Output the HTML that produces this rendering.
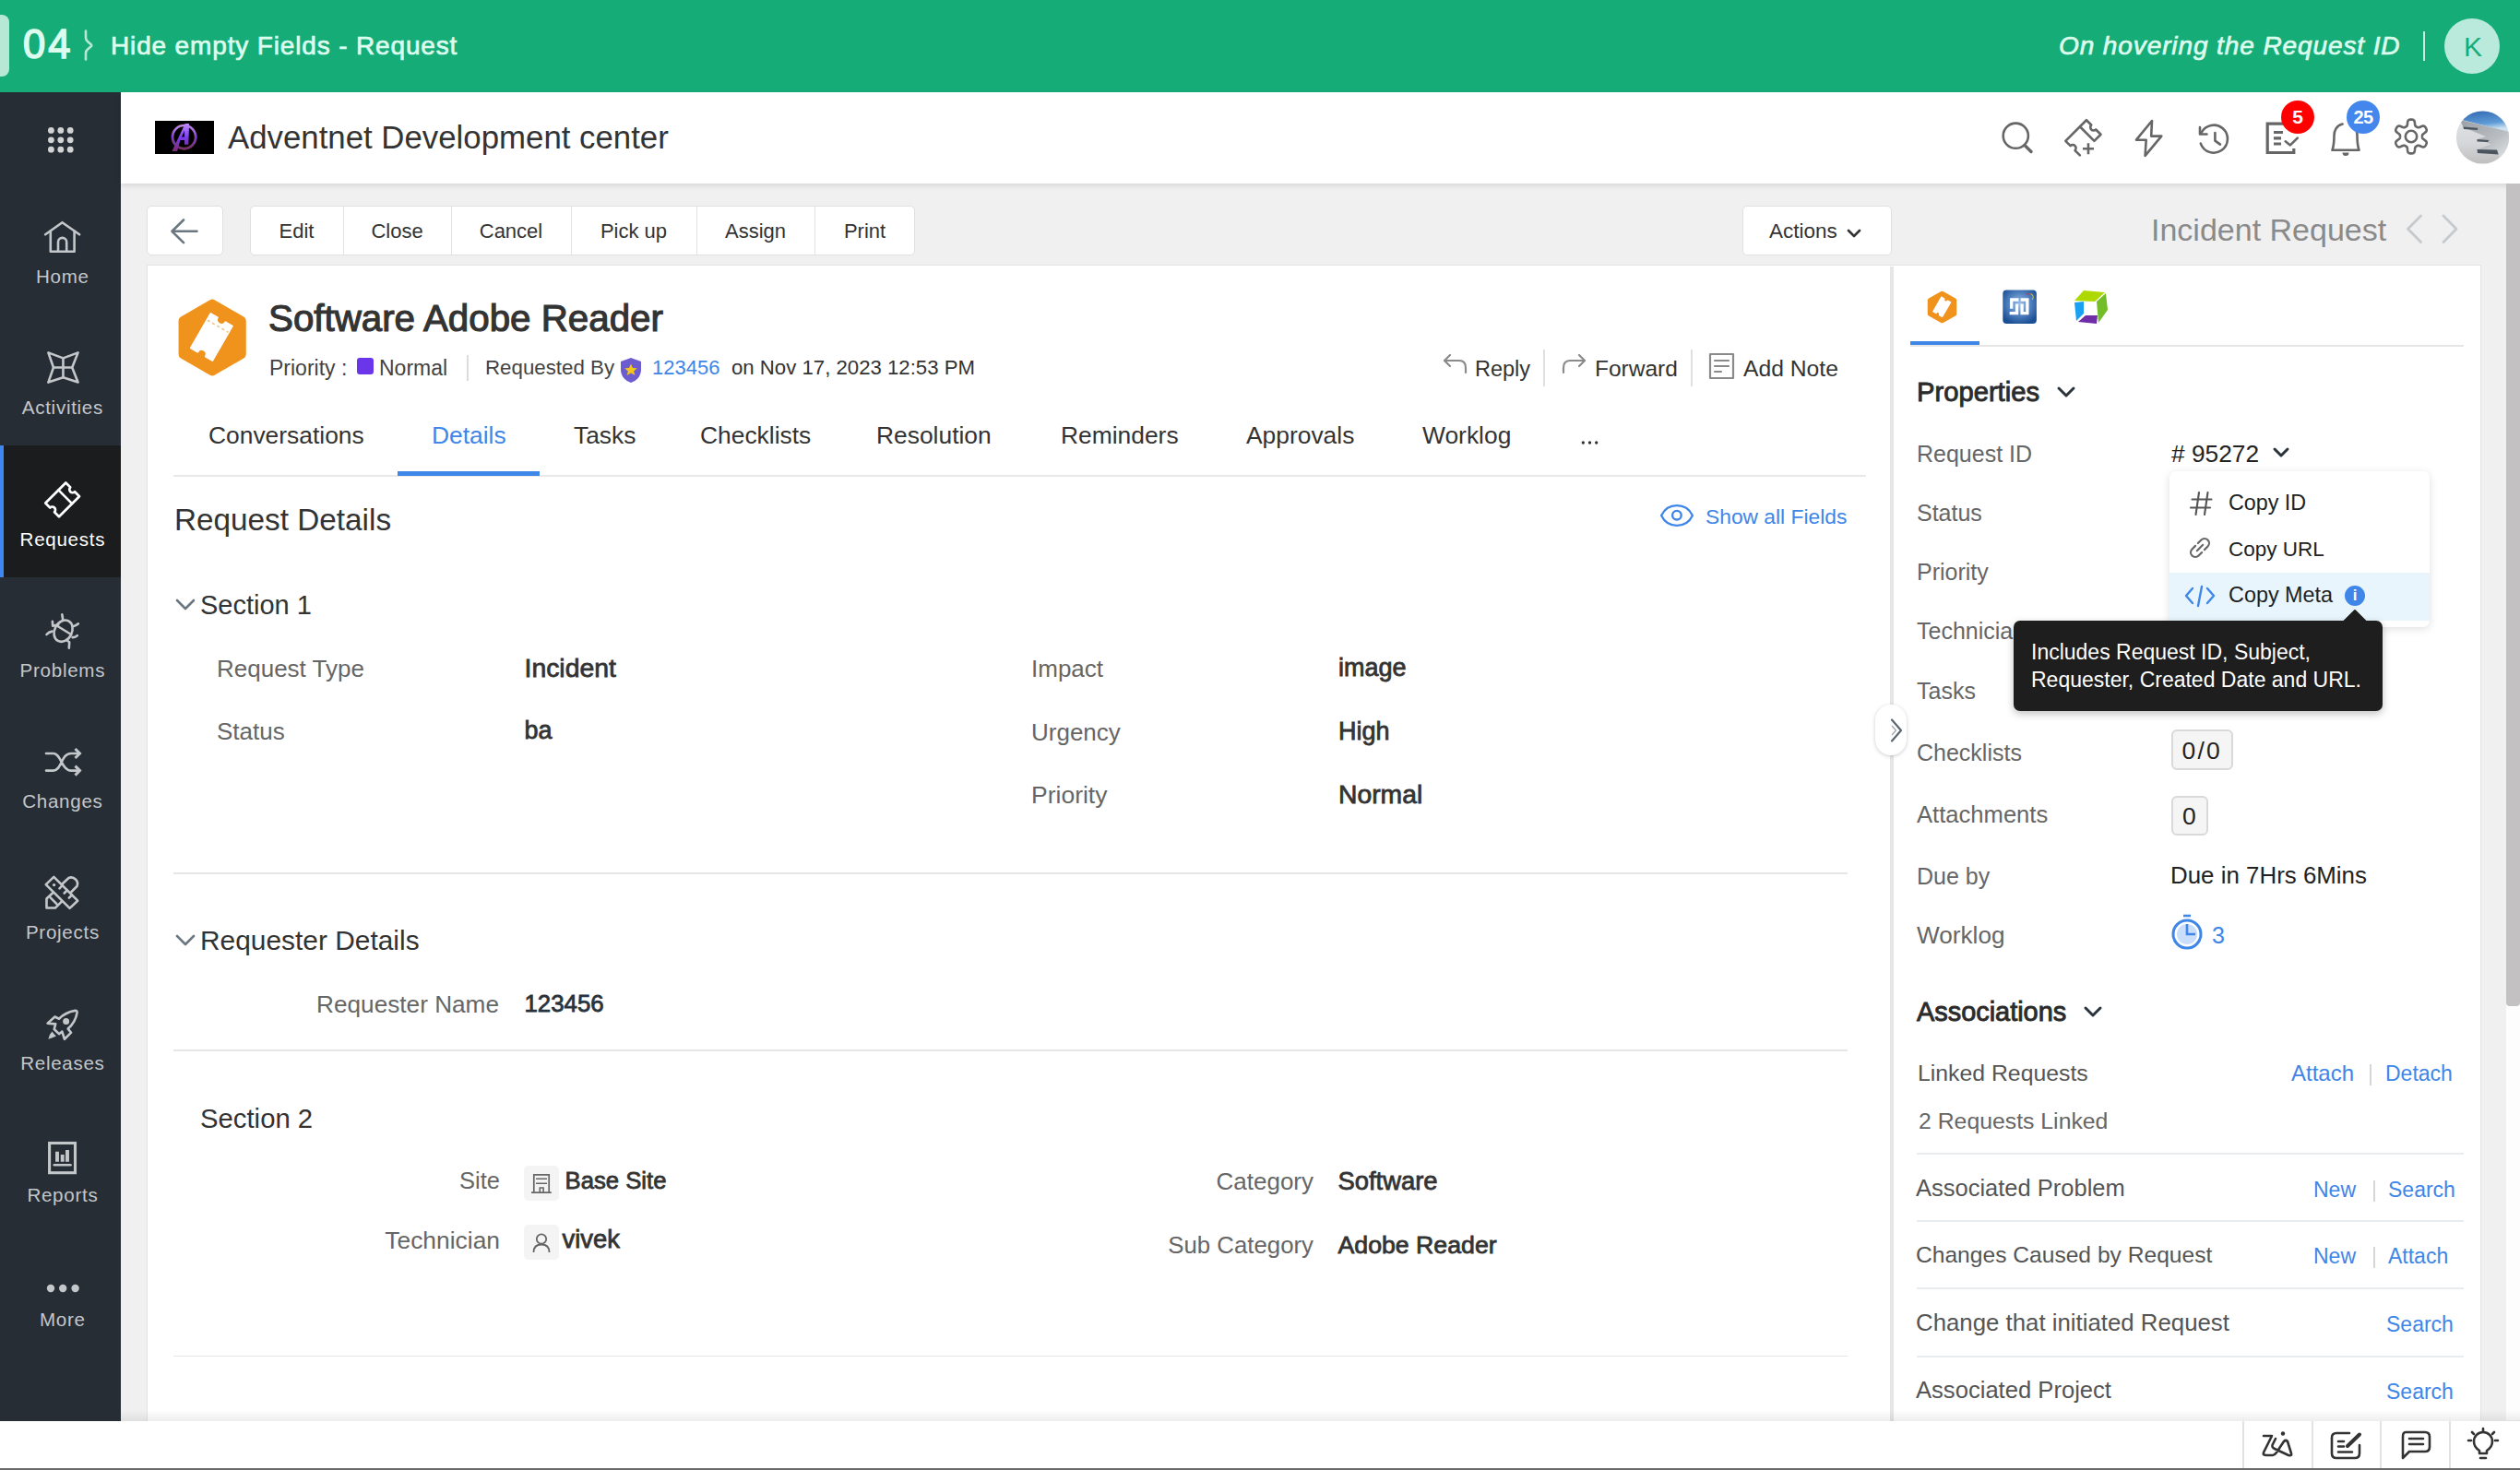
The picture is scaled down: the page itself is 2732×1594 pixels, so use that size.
<!DOCTYPE html>
<html><head><meta charset="utf-8"><style>
html,body{margin:0;padding:0;width:2732px;height:1594px;overflow:hidden;background:#f0f0f0;}
body{position:relative;font-family:"Liberation Sans",sans-serif;}
.b{position:absolute;}
.t{position:absolute;white-space:nowrap;line-height:1;}
svg{overflow:visible;}
</style></head><body>
<div class="b" style="left:0px;top:0px;width:2732px;height:100px;background:#16ac78;"></div>
<div class="b" style="left:-10px;top:16px;width:20px;height:67px;background:#b6e8d5;border-radius:8px;"></div>
<div class="t " style="left:25.0px;top:27.2px;font-size:43.5px;color:#dcfcee;-webkit-text-stroke:1.6px #dcfcee;letter-spacing:3px;">04</div>
<svg class="b" style="left:90px;top:32px;" width="14" height="34" viewBox="0 0 14 34"><path d="M3 1.5 V9 Q3 11.5 5.5 13.5 L8.5 16 Q10 17 8.5 18.5 L5.5 21 Q3 23 3 25.5 V32.5" fill="none" stroke="#b6e8d5" stroke-width="2.6" stroke-linecap="round" stroke-linejoin="round"/></svg>
<div class="t " style="left:120.0px;top:36.3px;font-size:28px;color:#dcfcee;-webkit-text-stroke:0.7px #dcfcee;letter-spacing:0.85px;">Hide empty Fields - Request</div>
<div class="t " style="left:2232.0px;top:36.3px;font-size:28px;color:#dcfcee;font-style:italic;-webkit-text-stroke:0.7px #dcfcee;letter-spacing:0.9px;">On hovering the Request ID</div>
<div class="b" style="left:2627px;top:34px;width:2px;height:32px;background:#c7f0e0;"></div>
<div class="b" style="left:2650px;top:20px;width:60px;height:60px;background:#b9eadb;border-radius:50%;"></div>
<div class="t " style="left:2671.0px;top:35.6px;font-size:30px;color:#16ac78;">K</div>
<div class="b" style="left:0px;top:100px;width:131px;height:1441px;background:#262d35;"></div>
<svg class="b" style="left:52px;top:138px;" width="32" height="32" viewBox="0 0 32 32"><circle cx="3.4" cy="3.4" r="3.4" fill="#d2d3d5"/><circle cx="3.4" cy="13.8" r="3.4" fill="#d2d3d5"/><circle cx="3.4" cy="24.2" r="3.4" fill="#d2d3d5"/><circle cx="13.8" cy="3.4" r="3.4" fill="#d2d3d5"/><circle cx="13.8" cy="13.8" r="3.4" fill="#d2d3d5"/><circle cx="13.8" cy="24.2" r="3.4" fill="#d2d3d5"/><circle cx="24.2" cy="3.4" r="3.4" fill="#d2d3d5"/><circle cx="24.2" cy="13.8" r="3.4" fill="#d2d3d5"/><circle cx="24.2" cy="24.2" r="3.4" fill="#d2d3d5"/></svg>
<div id="side-items"></div>
<div class="b" style="left:0px;top:483px;width:131px;height:143px;background:#1a1c1d;"></div>
<div class="b" style="left:0px;top:483px;width:4px;height:143px;background:#3f87f0;"></div>
<svg class="b" style="left:44px;top:236px;" width="48" height="42" viewBox="0 0 48 42"><path d="M5.2 18.3 L23.5 5.2 L42.1 18.3" fill="none" stroke="#c4c7ca" stroke-width="2.6" stroke-linecap="round" stroke-linejoin="round"/><path d="M10.8 14.5 V36.7 H36.6 V14.5" fill="none" stroke="#c4c7ca" stroke-width="2.6" stroke-linecap="round" stroke-linejoin="round"/><path d="M19 36.7 V26.5 A4.6 4.6 0 0 1 28.2 26.5 V36.7" fill="none" stroke="#c4c7ca" stroke-width="2.6" stroke-linecap="round" stroke-linejoin="round"/></svg>
<div class="t" style="left:4.4px;width:127px;text-align:center;top:289.6px;font-size:20.6px;color:#c4c7ca;letter-spacing:0.7px;">Home</div>
<svg class="b" style="left:47px;top:377px;" width="44" height="44" viewBox="0 0 44 44"><path d="M5.36 5.36 L21.46 11.35 L37.57 5.36 L31.2 21.46 L37.57 37.57 L21.46 32.3 L5.36 37.57 L10.98 21.46 Z" fill="none" stroke="#c4c7ca" stroke-width="2.6" stroke-linecap="round" stroke-linejoin="round"/><path d="M21.46 11.35 V32.3 M10.98 21.46 H31.2" fill="none" stroke="#c4c7ca" stroke-width="2.6" stroke-linecap="round" stroke-linejoin="round"/></svg>
<div class="t" style="left:4.4px;width:127px;text-align:center;top:431.6px;font-size:20.6px;color:#c4c7ca;letter-spacing:0.7px;">Activities</div>
<svg class="b" style="left:45px;top:519px;" width="46" height="46" viewBox="0 0 46 46"><g transform="translate(22.65 22.85) rotate(-45)"><path d="M-15.6 -10.4 H15.6 V-3.4 A3.4 3.4 0 0 0 15.6 3.4 V10.4 H-15.6 V3.4 A3.4 3.4 0 0 0 -15.6 -3.4 Z" fill="none" stroke="#ffffff" stroke-width="2.7" stroke-linecap="round" stroke-linejoin="round"/><path d="M4.4 -10.4 V10.4" fill="none" stroke="#ffffff" stroke-width="2.7" stroke-linecap="round" stroke-linejoin="round"/></g></svg>
<div class="t" style="left:4.4px;width:127px;text-align:center;top:574.6px;font-size:20.6px;color:#ffffff;letter-spacing:0.7px;">Requests</div>
<svg class="b" style="left:46px;top:662px;" width="44" height="44" viewBox="0 0 44 44"><ellipse cx="22.6" cy="22.2" rx="9.4" ry="12.2" transform="rotate(28 22.6 22.2)" fill="none" stroke="#c4c7ca" stroke-width="2.6" stroke-linecap="round" stroke-linejoin="round"/><path d="M16.5 17 L31.1 26" fill="none" stroke="#c4c7ca" stroke-width="2.6" stroke-linecap="round" stroke-linejoin="round"/><path d="M21.3 4.2 L22.1 9.5 M10.85 11.7 L11.2 16.6 L17.2 15.5 M4.5 26 Q7 23 10.5 22.6 M38.9 14.3 Q36 16.8 33.3 17.3 M37.8 27.1 Q35.5 29.5 32.6 29.1 M28.8 40.6 L29.2 34.2 L27 32.7" fill="none" stroke="#c4c7ca" stroke-width="2.6" stroke-linecap="round" stroke-linejoin="round"/></svg>
<div class="t" style="left:4.4px;width:127px;text-align:center;top:716.6px;font-size:20.6px;color:#c4c7ca;letter-spacing:0.7px;">Problems</div>
<svg class="b" style="left:45px;top:808px;" width="46" height="36" viewBox="0 0 46 36"><path d="M5 9 H13 C21 9 22 27.6 32 27.6 H41 M5 27.6 H13 C22 27.6 21 9 32 9 H41" fill="none" stroke="#c4c7ca" stroke-width="2.6" stroke-linecap="round" stroke-linejoin="round"/><path d="M36.5 4 L41.5 9 L36.5 14 M36.5 22.6 L41.5 27.6 L36.5 32.6" fill="none" stroke="#c4c7ca" stroke-width="3" stroke-linecap="butt" stroke-linejoin="miter"/></svg>
<div class="t" style="left:4.4px;width:127px;text-align:center;top:858.6px;font-size:20.6px;color:#c4c7ca;letter-spacing:0.7px;">Changes</div>
<svg class="b" style="left:46px;top:947px;" width="44" height="44" viewBox="0 0 44 44"><path d="M28.46 4.99 L4.49 27.46 V37.57 H13.85 L37.45 13.97 A6.9 6.9 0 0 0 28.46 4.99 Z M8.98 26.7 L15.35 33.07" fill="none" stroke="#c4c7ca" stroke-width="2.6" stroke-linecap="round" stroke-linejoin="round"/><path d="M12.35 3.86 L38.2 29.7 L29.6 37.9 L3.74 12.1 Z" fill="#262d35" stroke="#c4c7ca" stroke-width="2.6" stroke-linejoin="round"/><path d="M21.66 13.16 L18.48 16.34 M26.83 18.33 L23.65 21.51 M32 23.5 L28.82 26.68" fill="none" stroke="#c4c7ca" stroke-width="2.6" stroke-linecap="round" stroke-linejoin="round"/><circle cx="12.6" cy="12.6" r="1.7" fill="#c4c7ca"/></svg>
<div class="t" style="left:4.4px;width:127px;text-align:center;top:1000.6px;font-size:20.6px;color:#c4c7ca;letter-spacing:0.7px;">Projects</div>
<svg class="b" style="left:46px;top:1090px;" width="44" height="42" viewBox="0 0 44 42"><path d="M5.61 19.59 L13.48 12.48 L17.97 14.72 Q25 7.5 35.5 5.9 Q37.8 5.8 37.5 8.2 Q36 18 27.7 25.58 L31.08 29.7 L23.96 36.8 L21.34 28.58 L17.97 31.2 L12.73 25.96 L14.22 20.34 Z" fill="none" stroke="#c4c7ca" stroke-width="2.6" stroke-linecap="round" stroke-linejoin="round"/><circle cx="25.65" cy="17.53" r="3.5" fill="#c4c7ca"/><path d="M10.48 28.58 Q7 32 6.36 36.8 Q11 35.5 14.97 33.45 Q12.5 31.5 10.48 28.58 Z" fill="#c4c7ca"/></svg>
<div class="t" style="left:4.4px;width:127px;text-align:center;top:1142.6px;font-size:20.6px;color:#c4c7ca;letter-spacing:0.7px;">Releases</div>
<svg class="b" style="left:48px;top:1232px;" width="40" height="43" viewBox="0 0 40 43"><rect x="5.6" y="7.5" width="27.9" height="32.2" fill="none" stroke="#c4c7ca" stroke-width="3.1"/><path d="M10.8 31.2 H28.5" fill="none" stroke="#c4c7ca" stroke-width="2.6" stroke-linecap="round" stroke-linejoin="round"/><path d="M14 16.8 V27.8 M19.7 20 V27.8 M25 14.9 V27.8" fill="none" stroke="#c4c7ca" stroke-width="3.9"/></svg>
<div class="t" style="left:4.4px;width:127px;text-align:center;top:1285.6px;font-size:20.6px;color:#c4c7ca;letter-spacing:0.7px;">Reports</div>
<svg class="b" style="left:48px;top:1390px;" width="40" height="14" viewBox="0 0 40 14"><circle cx="7" cy="7" r="4.2" fill="#c4c7ca"/><circle cx="20.2" cy="7" r="4.2" fill="#c4c7ca"/><circle cx="33.6" cy="7" r="4.2" fill="#c4c7ca"/></svg>
<div class="t" style="left:4.4px;width:127px;text-align:center;top:1420.6px;font-size:20.6px;color:#c4c7ca;letter-spacing:0.7px;">More</div>
<div class="b" style="left:131px;top:100px;width:2601px;height:1440px;background:#f0f0f0;"></div>
<div class="b" style="left:131px;top:100px;width:2601px;height:99px;background:#fff;box-shadow:0 2px 6px rgba(0,0,0,0.12);"></div>
<div class="b" style="left:2717px;top:199px;width:15px;height:1341px;background:#fdfdfd;"></div>
<div class="b" style="left:2717px;top:199px;width:15px;height:892px;background:#c3c1c2;border-radius:0 0 4px 4px;"></div>
<svg class="b" style="left:168px;top:131px;" width="64" height="36" viewBox="0 0 64 36"><defs><linearGradient id="ag" x1="0" y1="0" x2="0" y2="1"><stop offset="0" stop-color="#c38cff"/><stop offset="0.5" stop-color="#7a3cf0"/><stop offset="1" stop-color="#7a2a70"/></linearGradient></defs>
<rect width="64" height="36" fill="#000"/>
<circle cx="31.6" cy="17.6" r="12.6" fill="none" stroke="#b8863a" stroke-width="3" opacity="0.55"/>
<circle cx="31.6" cy="17.6" r="12.6" fill="none" stroke="url(#ag)" stroke-width="2.2"/>
<path d="M18.4 33 L32.7 2.9 H37.1 L36.3 25.7 L32 25.7 L32 21 L27.5 21 L24.1 33 Z" fill="url(#ag)"/>
<path d="M29 17.5 L32 10.5 L32 17.5 Z" fill="#000"/></svg>
<div class="t " style="left:247.0px;top:131.5px;font-size:34.8px;color:#333333;">Adventnet Development center</div>
<svg class="b" style="left:2166px;top:128px;" width="42" height="42" viewBox="0 0 42 42"><circle cx="19.3" cy="19.2" r="13.6" fill="none" stroke="#666666" stroke-width="2.6" stroke-linecap="round" stroke-linejoin="round"/><path d="M29 29.5 L36 36.5" fill="none" stroke="#666" stroke-width="3.4" stroke-linecap="round"/></svg>
<svg class="b" style="left:2232px;top:124px;" width="52" height="50" viewBox="0 0 52 50"><g transform="translate(26.4 25.3) rotate(-45)"><path d="M6 11 H16 V3.5 A3.5 3.5 0 0 1 16 -3.5 V-11 H-16 V-3.5 A3.5 3.5 0 0 1 -16 3.5 V11 M6 -11 V11" fill="none" stroke="#666666" stroke-width="2.6" stroke-linecap="round" stroke-linejoin="round"/></g><path d="M26 37.3 H38 M32 31.3 V43.3" fill="none" stroke="#666" stroke-width="2.6"/></svg>
<svg class="b" style="left:2310px;top:126px;" width="40" height="46" viewBox="0 0 40 46"><path d="M23 5 L6 25.7 H16.7 L15.6 42.9 L33.3 21.6 H22.2 Z" fill="none" stroke="#666666" stroke-width="2.6" stroke-linecap="round" stroke-linejoin="round"/></svg>
<svg class="b" style="left:2379px;top:130px;" width="44" height="44" viewBox="0 0 44 44"><path d="M7.5 14 A15 15 0 1 1 6.8 25.6" fill="none" stroke="#666666" stroke-width="2.6" stroke-linecap="round" stroke-linejoin="round"/><path d="M6 8 V15.5 H13.5" fill="none" stroke="#666666" stroke-width="2.6" stroke-linecap="round" stroke-linejoin="round"/><path d="M22.4 14 V22.6 L28 26.6" fill="none" stroke="#666666" stroke-width="2.6" stroke-linecap="round" stroke-linejoin="round"/></svg>
<svg class="b" style="left:2454px;top:130px;" width="42" height="40" viewBox="0 0 42 40"><path d="M25 4.2 H4.2 V35.5 H32.8 V31" fill="none" stroke="#666" stroke-width="3.2"/><path d="M11 13.5 H21 M11 19.8 H19 M11 26 H19" fill="none" stroke="#666" stroke-width="3.2"/><path d="M23.7 23.3 L28.9 27.4 L36.8 19.6" fill="none" stroke="#666666" stroke-width="2.6" stroke-linecap="round" stroke-linejoin="round"/></svg>
<div class="b" style="left:2473px;top:109px;width:36px;height:36px;background:#ff0000;border-radius:50%;"></div>
<div class="t" style="left:2473px;top:113px;width:36px;text-align:center;font-size:21px;line-height:28px;color:#fff;font-weight:700;">5</div>
<svg class="b" style="left:2524px;top:130px;" width="40" height="42" viewBox="0 0 40 42"><path d="M15.5 4.5 C9 6 6.5 12 6.5 17 C6.5 24 5.8 29 4.5 32.8 H33.5 C32.2 29 31.5 24 31.5 17 C31.5 15.5 31.3 14 31 12.5" fill="none" stroke="#666666" stroke-width="2.6" stroke-linecap="round" stroke-linejoin="round"/><path d="M15.5 35.5 H22.5 A3.5 3.5 0 0 1 15.5 35.5 Z" fill="#666"/></svg>
<div class="b" style="left:2544px;top:109px;width:36px;height:36px;background:#4387ec;border-radius:50%;"></div>
<div class="t" style="left:2544px;top:113px;width:36px;text-align:center;font-size:20px;line-height:28px;color:#fff;font-weight:700;letter-spacing:-0.5px;">25</div>
<svg class="b" style="left:2593px;top:127px;" width="42" height="42" viewBox="0 0 42 42"><path d="M21.00 2.60 L21.48 2.61 L21.96 2.65 L22.44 2.72 L22.91 2.83 L23.37 3.01 L23.81 3.28 L24.21 3.70 L24.54 4.35 L24.78 5.24 L24.93 6.32 L25.03 7.39 L25.13 8.28 L25.28 8.93 L25.46 9.37 L25.69 9.68 L25.93 9.92 L26.19 10.11 L26.46 10.29 L26.73 10.45 L27.00 10.61 L27.27 10.76 L27.55 10.91 L27.83 11.06 L28.13 11.19 L28.46 11.28 L28.84 11.32 L29.32 11.26 L29.95 11.06 L30.77 10.70 L31.75 10.25 L32.76 9.84 L33.65 9.61 L34.38 9.58 L34.94 9.71 L35.40 9.95 L35.78 10.26 L36.11 10.61 L36.41 10.99 L36.68 11.39 L36.93 11.80 L37.17 12.22 L37.37 12.66 L37.55 13.11 L37.69 13.57 L37.77 14.05 L37.75 14.57 L37.58 15.13 L37.19 15.74 L36.54 16.40 L35.68 17.07 L34.80 17.69 L34.08 18.22 L33.59 18.67 L33.30 19.05 L33.15 19.40 L33.07 19.73 L33.03 20.05 L33.01 20.37 L33.00 20.69 L33.00 21.00 L33.00 21.31 L33.01 21.63 L33.03 21.95 L33.07 22.27 L33.15 22.60 L33.30 22.95 L33.59 23.33 L34.08 23.78 L34.80 24.31 L35.68 24.93 L36.54 25.60 L37.19 26.26 L37.58 26.87 L37.75 27.43 L37.77 27.95 L37.69 28.43 L37.55 28.89 L37.37 29.34 L37.17 29.78 L36.93 30.20 L36.68 30.61 L36.41 31.01 L36.11 31.39 L35.78 31.74 L35.40 32.05 L34.94 32.29 L34.38 32.42 L33.65 32.39 L32.76 32.16 L31.75 31.75 L30.77 31.30 L29.95 30.94 L29.32 30.74 L28.84 30.68 L28.46 30.72 L28.13 30.81 L27.83 30.94 L27.55 31.09 L27.27 31.24 L27.00 31.39 L26.73 31.55 L26.46 31.71 L26.19 31.89 L25.93 32.08 L25.69 32.32 L25.46 32.63 L25.28 33.07 L25.13 33.72 L25.03 34.61 L24.93 35.68 L24.78 36.76 L24.54 37.65 L24.21 38.30 L23.81 38.72 L23.37 38.99 L22.91 39.17 L22.44 39.28 L21.96 39.35 L21.48 39.39 L21.00 39.40 L20.52 39.39 L20.04 39.35 L19.56 39.28 L19.09 39.17 L18.63 38.99 L18.19 38.72 L17.79 38.30 L17.46 37.65 L17.22 36.76 L17.07 35.68 L16.97 34.61 L16.87 33.72 L16.72 33.07 L16.54 32.63 L16.31 32.32 L16.07 32.08 L15.81 31.89 L15.54 31.71 L15.27 31.55 L15.00 31.39 L14.73 31.24 L14.45 31.09 L14.17 30.94 L13.87 30.81 L13.54 30.72 L13.16 30.68 L12.68 30.74 L12.05 30.94 L11.23 31.30 L10.25 31.75 L9.24 32.16 L8.35 32.39 L7.62 32.42 L7.06 32.29 L6.60 32.05 L6.22 31.74 L5.89 31.39 L5.59 31.01 L5.32 30.61 L5.07 30.20 L4.83 29.78 L4.63 29.34 L4.45 28.89 L4.31 28.43 L4.23 27.95 L4.25 27.43 L4.42 26.87 L4.81 26.26 L5.46 25.60 L6.32 24.93 L7.20 24.31 L7.92 23.78 L8.41 23.33 L8.70 22.95 L8.85 22.60 L8.93 22.27 L8.97 21.95 L8.99 21.63 L9.00 21.31 L9.00 21.00 L9.00 20.69 L8.99 20.37 L8.97 20.05 L8.93 19.73 L8.85 19.40 L8.70 19.05 L8.41 18.67 L7.92 18.22 L7.20 17.69 L6.32 17.07 L5.46 16.40 L4.81 15.74 L4.42 15.13 L4.25 14.57 L4.23 14.05 L4.31 13.57 L4.45 13.11 L4.63 12.66 L4.83 12.22 L5.07 11.80 L5.32 11.39 L5.59 10.99 L5.89 10.61 L6.22 10.26 L6.60 9.95 L7.06 9.71 L7.62 9.58 L8.35 9.61 L9.24 9.84 L10.25 10.25 L11.23 10.70 L12.05 11.06 L12.68 11.26 L13.16 11.32 L13.54 11.28 L13.87 11.19 L14.17 11.06 L14.45 10.91 L14.73 10.76 L15.00 10.61 L15.27 10.45 L15.54 10.29 L15.81 10.11 L16.07 9.92 L16.31 9.68 L16.54 9.37 L16.72 8.93 L16.87 8.28 L16.97 7.39 L17.07 6.32 L17.22 5.24 L17.46 4.35 L17.79 3.70 L18.19 3.28 L18.63 3.01 L19.09 2.83 L19.56 2.72 L20.04 2.65 L20.52 2.61 Z" fill="none" stroke="#666" stroke-width="2.6" stroke-linejoin="round"/><circle cx="21" cy="21" r="6.2" fill="none" stroke="#666666" stroke-width="2.6" stroke-linecap="round" stroke-linejoin="round"/></svg>
<svg class="b" style="left:2663px;top:120px;" width="58" height="58" viewBox="0 0 58 58"><defs><clipPath id="avc"><circle cx="28.5" cy="29" r="28.6"/></clipPath>
<linearGradient id="sky" x1="0" y1="0" x2="0.3" y2="1"><stop offset="0" stop-color="#2f64b0"/><stop offset="0.7" stop-color="#5d9bd6"/><stop offset="1" stop-color="#cfe3f2"/></linearGradient>
<linearGradient id="cl" x1="0" y1="0" x2="0" y2="1"><stop offset="0" stop-color="#e4e6ea"/><stop offset="0.6" stop-color="#d6d7d9"/><stop offset="1" stop-color="#bfbfbf"/></linearGradient>
<linearGradient id="wg" x1="0" y1="0" x2="1" y2="1"><stop offset="0" stop-color="#9aa0a6"/><stop offset="0.6" stop-color="#b9bdc1"/><stop offset="1" stop-color="#e2e4e6"/></linearGradient></defs>
<g clip-path="url(#avc)"><rect width="58" height="58" fill="url(#cl)"/><path d="M0 0 H58 V23 L6 10 H0 Z" fill="url(#sky)"/>
<path d="M4 10 L58 23 V38 L47 51 L45.6 47.4 L23 42 L37.5 36.5 L23 31 L32 28 L7.5 18 Z" fill="url(#wg)"/>
<path d="M7.5 17.4 L23.3 18.8 L23 21 L8 20 Z M22.5 31 L35.5 32 L34 34 L22.5 33.5 Z M22.5 42 L44 42.5 L45.7 47.4 L23 46 Z" fill="#4a5560"/></g></svg>
<div class="b" style="left:159px;top:223px;width:83px;height:54px;background:#fff;border:1px solid #e0e0e0;border-radius:5px;box-sizing:border-box;"></div>
<svg class="b" style="left:183px;top:235px;" width="34" height="32" viewBox="0 0 34 32"><path d="M16 3.5 L3.5 15.8 L16 28.2 M3.5 15.8 H30.5" fill="none" stroke="#6b7780" stroke-width="2.6" stroke-linecap="round" stroke-linejoin="round"/></svg>
<div class="b" style="left:271px;top:223px;width:721px;height:54px;background:#fff;border:1px solid #e0e0e0;border-radius:5px;box-sizing:border-box;"></div>
<div class="t" style="left:271px;width:101px;text-align:center;top:240.4px;font-size:22px;color:#333;">Edit</div>
<div class="b" style="left:372px;top:224px;width:1px;height:52px;background:#e3e3e3;"></div>
<div class="t" style="left:372px;width:117px;text-align:center;top:240.4px;font-size:22px;color:#333;">Close</div>
<div class="b" style="left:489px;top:224px;width:1px;height:52px;background:#e3e3e3;"></div>
<div class="t" style="left:489px;width:130px;text-align:center;top:240.4px;font-size:22px;color:#333;">Cancel</div>
<div class="b" style="left:619px;top:224px;width:1px;height:52px;background:#e3e3e3;"></div>
<div class="t" style="left:619px;width:136px;text-align:center;top:240.4px;font-size:22px;color:#333;">Pick up</div>
<div class="b" style="left:755px;top:224px;width:1px;height:52px;background:#e3e3e3;"></div>
<div class="t" style="left:755px;width:128px;text-align:center;top:240.4px;font-size:22px;color:#333;">Assign</div>
<div class="b" style="left:883px;top:224px;width:1px;height:52px;background:#e3e3e3;"></div>
<div class="t" style="left:883px;width:109px;text-align:center;top:240.4px;font-size:22px;color:#333;">Print</div>
<div class="b" style="left:1889px;top:223px;width:162px;height:54px;background:#fff;border:1px solid #e0e0e0;border-radius:5px;box-sizing:border-box;"></div>
<div class="t " style="left:1918.0px;top:240.0px;font-size:22.5px;color:#333;">Actions</div>
<svg class="b" style="left:2001px;top:246px;" width="18" height="14" viewBox="0 0 18 14"><path d="M3 4 L9 10 L15 4" fill="none" stroke="#333" stroke-width="2.6" stroke-linecap="round" stroke-linejoin="round"/></svg>
<div class="t " style="left:2332.0px;top:232.2px;font-size:34px;color:#8a8a8a;">Incident Request</div>
<svg class="b" style="left:2605px;top:231px;" width="28" height="34" viewBox="0 0 28 34"><path d="M19.5 3 L5.5 17.2 L19.5 31.5" fill="none" stroke="#c6cacd" stroke-width="2.8" stroke-linecap="round" stroke-linejoin="round"/></svg>
<svg class="b" style="left:2641px;top:231px;" width="28" height="34" viewBox="0 0 28 34"><path d="M8 3 L22 17.2 L8 31.5" fill="none" stroke="#c6cacd" stroke-width="2.8" stroke-linecap="round" stroke-linejoin="round"/></svg>
<div class="b" style="left:159px;top:287px;width:2531px;height:1300px;background:#fff;border:1.5px solid #e3e3e3;box-sizing:border-box;"></div>
<div class="b" style="left:2049px;top:289px;width:4px;height:1300px;background:#e6e6e6;"></div>
<svg class="b" style="left:190px;top:322px;" width="80" height="88" viewBox="0 0 80 88"><path d="M40.15 7.65 L71.76 25.83 L71.76 62.17 L40.15 80.35 L8.54 62.17 L8.54 25.82 Z" fill="#f0931d" stroke="#f0931d" stroke-width="10" stroke-linejoin="round"/><g transform="translate(39.4 43.4) rotate(-60)"><path d="M-21.5 -13.5 H21.5 V-5 A5 5 0 0 0 21.5 5 V13.5 H-21.5 V5 A5 5 0 0 0 -21.5 -5 Z" fill="#e07d10" opacity="0.35" transform="translate(1.5 1.5)"/><path d="M-21.5 -13.5 H21.5 V-5 A5 5 0 0 0 21.5 5 V13.5 H-21.5 V5 A5 5 0 0 0 -21.5 -5 Z" fill="#fff" stroke="#fff" stroke-width="2" stroke-linejoin="round"/><path d="M13.5 -13 V13" stroke="#f2c48c" stroke-width="1.6" stroke-dasharray="3 3"/></g></svg>
<div class="t " style="left:291.0px;top:325.9px;font-size:40.3px;color:#333;-webkit-text-stroke:1.15px #333;">Software Adobe Reader</div>
<div class="t " style="left:292.0px;top:387.5px;font-size:23px;color:#444;">Priority :</div>
<div class="b" style="left:387px;top:388px;width:18px;height:18px;background:#6b36ea;border-radius:3px;"></div>
<div class="t " style="left:411.0px;top:387.5px;font-size:23px;color:#444;">Normal</div>
<div class="b" style="left:506px;top:385px;width:1.5px;height:28px;background:#dcdcdc;"></div>
<div class="t " style="left:526.0px;top:388.1px;font-size:22.3px;color:#444;">Requested By</div>
<svg class="b" style="left:671px;top:386px;" width="26" height="31" viewBox="0 0 26 31"><path d="M13 2 L24 6 V15 C24 22 19 27 13 29 C7 27 2 22 2 15 V6 Z" fill="#6d5bd0"/><path d="M13 8.5 L15 13 L19.8 13.3 L16.1 16.4 L17.4 21 L13 18.4 L8.6 21 L9.9 16.4 L6.2 13.3 L11 13 Z" fill="#f5c518"/></svg>
<div class="t " style="left:707.0px;top:388.4px;font-size:22px;color:#3e86e8;">123456</div>
<div class="t " style="left:793.0px;top:388.2px;font-size:22.2px;color:#333;">on Nov 17, 2023 12:53 PM</div>
<svg class="b" style="left:1562px;top:380px;" width="32" height="32" viewBox="0 0 32 32"><path d="M10 5 L4 11 L10 17" fill="none" stroke="#8a8a8a" stroke-width="2.2" stroke-linecap="round" stroke-linejoin="round"/><path d="M4 11 H20 C25 11 27 14 27 19 V24" fill="none" stroke="#8a8a8a" stroke-width="2.2" stroke-linecap="round" stroke-linejoin="round"/></svg>
<div class="t " style="left:1599.0px;top:389.1px;font-size:23.5px;color:#333;">Reply</div>
<div class="b" style="left:1673px;top:379px;width:1.5px;height:40px;background:#e0e0e0;"></div>
<svg class="b" style="left:1690px;top:380px;" width="32" height="32" viewBox="0 0 32 32"><path d="M22 5 L28 11 L22 17" fill="none" stroke="#8a8a8a" stroke-width="2.2" stroke-linecap="round" stroke-linejoin="round"/><path d="M28 11 H12 C7 11 5 14 5 19 V24" fill="none" stroke="#8a8a8a" stroke-width="2.2" stroke-linecap="round" stroke-linejoin="round"/></svg>
<div class="t " style="left:1729.0px;top:388.3px;font-size:24.5px;color:#333;">Forward</div>
<div class="b" style="left:1833px;top:379px;width:1.5px;height:40px;background:#e0e0e0;"></div>
<svg class="b" style="left:1850px;top:381px;" width="34" height="32" viewBox="0 0 34 32"><rect x="4" y="3" width="25" height="26" fill="none" stroke="#8a8a8a" stroke-width="2.2" stroke-linecap="round" stroke-linejoin="round"/><path d="M9 10 H24 M9 16 H24 M9 22 H16" fill="none" stroke="#8a8a8a" stroke-width="2.2" stroke-linecap="round" stroke-linejoin="round"/></svg>
<div class="t " style="left:1890.0px;top:388.1px;font-size:24.7px;color:#333;">Add Note</div>
<div class="t " style="left:226.0px;top:458.7px;font-size:26.4px;color:#333;">Conversations</div>
<div class="t " style="left:468.0px;top:458.7px;font-size:26.4px;color:#3e86e8;">Details</div>
<div class="t " style="left:622.0px;top:458.7px;font-size:26.4px;color:#333;">Tasks</div>
<div class="t " style="left:759.0px;top:458.7px;font-size:26.4px;color:#333;">Checklists</div>
<div class="t " style="left:950.0px;top:458.7px;font-size:26.4px;color:#333;">Resolution</div>
<div class="t " style="left:1150.0px;top:458.7px;font-size:26.4px;color:#333;">Reminders</div>
<div class="t " style="left:1351.0px;top:458.7px;font-size:26.4px;color:#333;">Approvals</div>
<div class="t " style="left:1542.0px;top:458.7px;font-size:26.4px;color:#333;">Worklog</div>
<svg class="b" style="left:1714px;top:476px;" width="22" height="8" viewBox="0 0 22 8"><circle cx="2.3" cy="4" r="1.7" fill="#333"/><circle cx="9.5" cy="4" r="1.7" fill="#333"/><circle cx="16.7" cy="4" r="1.7" fill="#333"/></svg>
<div class="b" style="left:188px;top:515px;width:1835px;height:2px;background:#e9e9e9;"></div>
<div class="b" style="left:431px;top:511px;width:154px;height:4.5px;background:#3e86e8;"></div>
<div class="t " style="left:189.0px;top:546.8px;font-size:33.3px;color:#333;">Request Details</div>
<svg class="b" style="left:1798px;top:545px;" width="40" height="30" viewBox="0 0 40 30"><path d="M3.1 14 C10 -0.4 30 -0.4 36.9 14 C30 28.4 10 28.4 3.1 14 Z" fill="none" stroke="#3e86e8" stroke-width="2.3" stroke-linejoin="round"/><circle cx="19.9" cy="13.7" r="4.8" fill="none" stroke="#3e86e8" stroke-width="2.4"/></svg>
<div class="t " style="left:1849.0px;top:548.7px;font-size:22.8px;color:#3e86e8;">Show all Fields</div>
<svg class="b" style="left:188px;top:646px;" width="26" height="20" viewBox="0 0 26 20"><path d="M4 5 L13 14 L22 5" fill="none" stroke="#6b7780" stroke-width="2.6" stroke-linecap="round" stroke-linejoin="round"/></svg>
<div class="t " style="left:217.0px;top:641.5px;font-size:29px;color:#333;">Section 1</div>
<div class="t " style="left:235.0px;top:712.0px;font-size:26px;color:#666;">Request Type</div>
<div class="t " style="left:568.5px;top:710.0px;font-size:28.4px;color:#333;-webkit-text-stroke:0.8px #333;">Incident</div>
<div class="t " style="left:1118.0px;top:712.0px;font-size:26px;color:#666;">Impact</div>
<div class="t " style="left:1451.0px;top:711.1px;font-size:27px;color:#333;-webkit-text-stroke:0.8px #333;">image</div>
<div class="t " style="left:235.0px;top:780.0px;font-size:26px;color:#666;">Status</div>
<div class="t " style="left:568.5px;top:779.1px;font-size:27px;color:#333;-webkit-text-stroke:0.8px #333;">ba</div>
<div class="t " style="left:1118.0px;top:781.0px;font-size:26px;color:#666;">Urgency</div>
<div class="t " style="left:1451.0px;top:780.1px;font-size:27px;color:#333;-webkit-text-stroke:0.8px #333;">High</div>
<div class="t " style="left:1118.0px;top:848.6px;font-size:26.5px;color:#666;">Priority</div>
<div class="t " style="left:1451.0px;top:847.0px;font-size:28.3px;color:#333;-webkit-text-stroke:0.8px #333;">Normal</div>
<div class="b" style="left:188px;top:946px;width:1815px;height:1.5px;background:#e6e6e6;"></div>
<svg class="b" style="left:188px;top:1010px;" width="26" height="20" viewBox="0 0 26 20"><path d="M4 5 L13 14 L22 5" fill="none" stroke="#6b7780" stroke-width="2.6" stroke-linecap="round" stroke-linejoin="round"/></svg>
<div class="t " style="left:217.0px;top:1004.7px;font-size:29.9px;color:#333;">Requester Details</div>
<div class="t" style="right:2191.0px;top:1075.8px;font-size:26.2px;color:#666;">Requester Name</div>
<div class="t " style="left:568.5px;top:1076.2px;font-size:25.8px;color:#28323c;-webkit-text-stroke:0.8px #28323c;">123456</div>
<div class="b" style="left:188px;top:1138px;width:1815px;height:1.5px;background:#e6e6e6;"></div>
<div class="t " style="left:217.0px;top:1198.2px;font-size:29.3px;color:#333;">Section 2</div>
<div class="t" style="right:2190.0px;top:1268.4px;font-size:25.5px;color:#666;">Site</div>
<div class="b" style="left:568px;top:1264px;width:38px;height:38px;background:#f4f4f4;border-radius:5px;"></div>
<svg class="b" style="left:568px;top:1265px;" width="38" height="37" viewBox="0 0 38 37"><path d="M10.8 28 V8.8 H27.2 V28 M8 28.2 H29.8" fill="none" stroke="#666" stroke-width="1.7"/><path d="M13 13.3 H25 M13 18.2 H25 M17.3 28 V23 H21.1 V28" fill="none" stroke="#666" stroke-width="1.6"/></svg>
<div class="t " style="left:612.5px;top:1268.2px;font-size:25.7px;color:#333;-webkit-text-stroke:0.8px #333;">Base Site</div>
<div class="t" style="right:1308.0px;top:1268.0px;font-size:26px;color:#666;">Category</div>
<div class="t " style="left:1450.5px;top:1266.8px;font-size:27.4px;color:#333;-webkit-text-stroke:0.8px #333;">Software</div>
<div class="t" style="right:2190.0px;top:1331.7px;font-size:26.4px;color:#666;">Technician</div>
<div class="b" style="left:568px;top:1328px;width:38px;height:38px;background:#f4f4f4;border-radius:5px;"></div>
<svg class="b" style="left:568px;top:1328px;" width="38" height="38" viewBox="0 0 38 38"><circle cx="19" cy="15.5" r="5.2" fill="none" stroke="#666" stroke-width="1.8"/><path d="M10.5 30 C10.5 24 14 21.5 19 21.5 C24 21.5 27.5 24 27.5 30" fill="none" stroke="#666" stroke-width="1.8"/></svg>
<div class="t " style="left:609.5px;top:1329.8px;font-size:27.4px;color:#333;-webkit-text-stroke:0.8px #333;">vivek</div>
<div class="t" style="right:1308.0px;top:1338.2px;font-size:25.8px;color:#666;">Sub Category</div>
<div class="t " style="left:1450.5px;top:1337.4px;font-size:26.7px;color:#333;-webkit-text-stroke:0.8px #333;">Adobe Reader</div>
<div class="b" style="left:188px;top:1469.5px;width:1815px;height:1.5px;background:#e6e6e6;"></div>
<div class="b" style="left:2033px;top:764px;width:34px;height:55px;background:#fff;border-radius:17px;box-shadow:0 1px 4px rgba(0,0,0,0.2);"></div>
<svg class="b" style="left:2043px;top:776px;" width="26" height="32" viewBox="0 0 26 32"><path d="M8 4.5 L18 16 L8 27.5" fill="none" stroke="#5b6770" stroke-width="2.2" stroke-linecap="round" stroke-linejoin="round"/><path d="M8 11 L12.5 16 L8 21" fill="none" stroke="#9aa1a7" stroke-width="1.2"/></svg>
<svg class="b" style="left:2086px;top:312px;" width="40" height="42" viewBox="0 0 40 42"><path d="M19.50 6.20 L32.75 13.60 L32.75 28.40 L19.50 35.80 L6.25 28.40 L6.25 13.60 Z" fill="#f0931d" stroke="#f0931d" stroke-width="5" stroke-linejoin="round"/><g transform="translate(19.2 20.8) scale(0.42) rotate(-60)"><path d="M-21.5 -13.5 H21.5 V-5 A5 5 0 0 0 21.5 5 V13.5 H-21.5 V5 A5 5 0 0 0 -21.5 -5 Z" fill="#fff" stroke="#fff" stroke-width="3" stroke-linejoin="round"/></g></svg>
<svg class="b" style="left:2171px;top:314px;" width="37" height="37" viewBox="0 0 37 37"><defs><radialGradient id="bg1" cx="0.5" cy="0.42" r="0.62"><stop offset="0" stop-color="#9cc0ea"/><stop offset="0.55" stop-color="#4f7fbd"/><stop offset="1" stop-color="#1b4f94"/></radialGradient></defs>
<rect x="0.3" y="0.5" width="36.6" height="36.4" rx="4" fill="url(#bg1)"/>
<path d="M9.7 20.7 V11 H17.5 M15.55 15.6 V25.55 H7.65 M19.6 11 H26.85 V25.55 H21.1 V15.6" fill="none" stroke="#fff" stroke-width="3.3" stroke-linejoin="miter"/>
<path d="M25.5 5.2 Q28 4 30 5" fill="none" stroke="#c8344a" stroke-width="1"/><path d="M30.5 4.5 Q35 7 32 11" fill="none" stroke="#b8b040" stroke-width="1.3"/></svg>
<svg class="b" style="left:2247px;top:313px;" width="39" height="39" viewBox="0 0 39 39"><path d="M2 13 L12 2 L35 4 L24 14 Z" fill="#aed900"/><path d="M26 14 L36 5 L38 23 L28 37 Z" fill="#71be29"/>
<path d="M2 15 L12 14 L12 27 L4 35 Z" fill="#1ba1f2"/><path d="M6 36 L14 29 L27 29 L26 38 Z" fill="#6f2da8"/></svg>
<div class="b" style="left:2071px;top:370px;width:75px;height:4.5px;background:#3e86e8;"></div>
<div class="b" style="left:2071px;top:374px;width:600px;height:2px;background:#e6e6e6;"></div>
<div class="t " style="left:2078.0px;top:411.3px;font-size:29.2px;color:#2b2b2b;-webkit-text-stroke:0.9px #2b2b2b;">Properties</div>
<svg class="b" style="left:2227px;top:416px;" width="26" height="20" viewBox="0 0 26 20"><path d="M5 5 L13 13 L21 5" fill="none" stroke="#2b333b" stroke-width="3" stroke-linecap="round" stroke-linejoin="round"/></svg>
<div class="t " style="left:2078.0px;top:479.8px;font-size:25px;color:#666;">Request ID</div>
<div class="t " style="left:2078.0px;top:543.8px;font-size:25px;color:#666;">Status</div>
<div class="t " style="left:2078.0px;top:607.8px;font-size:25px;color:#666;">Priority</div>
<div class="t " style="left:2078.0px;top:671.8px;font-size:25px;color:#666;">Technician</div>
<div class="t " style="left:2078.0px;top:736.8px;font-size:25px;color:#666;">Tasks</div>
<div class="t " style="left:2078.0px;top:803.8px;font-size:25px;color:#666;">Checklists</div>
<div class="t " style="left:2078.0px;top:871.3px;font-size:25.6px;color:#666;">Attachments</div>
<div class="t " style="left:2078.0px;top:937.8px;font-size:25px;color:#666;">Due by</div>
<div class="t " style="left:2078.0px;top:1000.8px;font-size:26.2px;color:#666;">Worklog</div>
<div class="t " style="left:2354.0px;top:478.7px;font-size:26.3px;color:#222;"># 95272</div>
<svg class="b" style="left:2461px;top:481px;" width="24" height="20" viewBox="0 0 24 20"><path d="M5 6 L12 13 L19 6" fill="none" stroke="#2b333b" stroke-width="3" stroke-linecap="round" stroke-linejoin="round"/></svg>
<div class="b" style="left:2354px;top:791px;width:67px;height:44px;background:#f5f5f5;border:2px solid #d9d9d9;border-radius:6px;box-sizing:border-box;"></div>
<div class="t " style="left:2365.5px;top:800.6px;font-size:26.5px;color:#222;letter-spacing:2.2px;">0/0</div>
<div class="b" style="left:2354px;top:863px;width:40px;height:43px;background:#f5f5f5;border:2px solid #d9d9d9;border-radius:6px;box-sizing:border-box;"></div>
<div class="t " style="left:2366.0px;top:871.6px;font-size:26.5px;color:#222;">0</div>
<div class="t " style="left:2353.0px;top:937.1px;font-size:25.9px;color:#222;">Due in 7Hrs 6Mins</div>
<svg class="b" style="left:2350px;top:988px;" width="42" height="44" viewBox="0 0 42 44"><circle cx="21" cy="25" r="15" fill="none" stroke="#3e86e8" stroke-width="3"/><path d="M21 25 V14 A11 11 0 0 1 32 25 Z" fill="#fff"/><circle cx="21" cy="25" r="11" fill="#c9defa"/><path d="M21 14 V25 H30" fill="none" stroke="#3e86e8" stroke-width="2.6"/><path d="M17 5 H25" stroke="#3e86e8" stroke-width="2.6"/></svg>
<div class="t " style="left:2398.0px;top:1001.8px;font-size:25px;color:#3e86e8;">3</div>
<div class="t " style="left:2078.0px;top:1082.5px;font-size:28.9px;color:#2b2b2b;-webkit-text-stroke:0.9px #2b2b2b;">Associations</div>
<svg class="b" style="left:2256px;top:1088px;" width="26" height="20" viewBox="0 0 26 20"><path d="M5 5 L13 13 L21 5" fill="none" stroke="#2b333b" stroke-width="3" stroke-linecap="round" stroke-linejoin="round"/></svg>
<div class="t " style="left:2079.0px;top:1152.0px;font-size:24.8px;color:#555;">Linked Requests</div>
<div class="t " style="left:2484.0px;top:1151.7px;font-size:24px;color:#3e86e8;">Attach</div>
<div class="b" style="left:2569px;top:1154px;width:1.5px;height:23px;background:#d6d6d6;"></div>
<div class="t " style="left:2586.0px;top:1152.5px;font-size:23px;color:#3e86e8;">Detach</div>
<div class="t " style="left:2080.0px;top:1204.0px;font-size:24.8px;color:#666;">2 Requests Linked</div>
<div class="b" style="left:2078px;top:1250px;width:593px;height:2px;background:#e8ecef;"></div>
<div class="t " style="left:2077.0px;top:1276.4px;font-size:25.5px;color:#555;">Associated Problem</div>
<div class="t " style="left:2508.0px;top:1278.5px;font-size:23px;color:#3e86e8;">New</div>
<div class="t " style="left:2589.0px;top:1278.5px;font-size:23px;color:#3e86e8;">Search</div>
<div class="b" style="left:2573px;top:1280px;width:1.5px;height:23px;background:#d6d6d6;"></div>
<div class="t " style="left:2077.0px;top:1349.2px;font-size:24.6px;color:#555;">Changes Caused by Request</div>
<div class="t " style="left:2508.0px;top:1350.5px;font-size:23px;color:#3e86e8;">New</div>
<div class="t " style="left:2589.0px;top:1350.5px;font-size:23px;color:#3e86e8;">Attach</div>
<div class="b" style="left:2573px;top:1352px;width:1.5px;height:23px;background:#d6d6d6;"></div>
<div class="t " style="left:2077.0px;top:1422.2px;font-size:25.8px;color:#555;">Change that initiated Request</div>
<div class="t " style="left:2587.0px;top:1424.5px;font-size:23px;color:#3e86e8;">Search</div>
<div class="t " style="left:2077.0px;top:1495.3px;font-size:25.6px;color:#555;">Associated Project</div>
<div class="t " style="left:2587.0px;top:1497.5px;font-size:23px;color:#3e86e8;">Search</div>
<div class="b" style="left:2078px;top:1323px;width:593px;height:2px;background:#e8ecef;"></div>
<div class="b" style="left:2078px;top:1396px;width:593px;height:2px;background:#e8ecef;"></div>
<div class="b" style="left:2078px;top:1470px;width:593px;height:2px;background:#e8ecef;"></div>
<div class="b" style="left:131px;top:1529px;width:2601px;height:12px;background:linear-gradient(to bottom, rgba(0,0,0,0), rgba(0,0,0,0.07));"></div>
<div class="b" style="left:0px;top:1541px;width:2732px;height:53px;background:#fff;"></div>
<div class="b" style="left:0px;top:1592px;width:2732px;height:2px;background:#6a6a6a;"></div>
<div class="b" style="left:2431px;top:1541px;width:1.5px;height:51px;background:#e2e2e2;"></div>
<div class="b" style="left:2506px;top:1541px;width:1.5px;height:51px;background:#e2e2e2;"></div>
<div class="b" style="left:2580px;top:1541px;width:1.5px;height:51px;background:#e2e2e2;"></div>
<div class="b" style="left:2655px;top:1541px;width:1.5px;height:51px;background:#e2e2e2;"></div>
<svg class="b" style="left:2450px;top:1551px;" width="42" height="34" viewBox="0 0 42 34"><path d="M4 6 H13 L4 24 Q3 27 7 27 H14 Q16 27 18 24 L26 12 Q28 10 30 12 L34 25 Q35 28 31 27 L16 20 Q12 18 14 15 L17 9" fill="none" stroke="#333" stroke-width="2.6" stroke-linecap="round" stroke-linejoin="round"/><circle cx="25" cy="3.5" r="2.2" fill="#333"/></svg>
<svg class="b" style="left:2524px;top:1550px;" width="42" height="34" viewBox="0 0 42 34"><path d="M23 4 H9 Q4 4 4 9 V26 Q4 31 9 31 H29 Q34 31 34 26 V17" fill="none" stroke="#333" stroke-width="2.6" stroke-linecap="round" stroke-linejoin="round"/><path d="M11 13 H17 M11 18.5 H17 M11 24.5 H26" fill="none" stroke="#333" stroke-width="2.6" stroke-linecap="round" stroke-linejoin="round"/><path d="M21 18 L34 5.5" fill="none" stroke="#333" stroke-width="4" stroke-linecap="round"/></svg>
<svg class="b" style="left:2600px;top:1549px;" width="38" height="36" viewBox="0 0 38 36"><path d="M8 4 H29 Q34 4 34 9 V20 Q34 25 29 25 H12 L5 32 V9 Q5 4 8 4 Z" fill="none" stroke="#333" stroke-width="2.6" stroke-linecap="round" stroke-linejoin="round"/><path d="M12 11 H27 M12 17 H27" fill="none" stroke="#333" stroke-width="2.6" stroke-linecap="round" stroke-linejoin="round"/></svg>
<svg class="b" style="left:2675px;top:1548px;" width="40" height="38" viewBox="0 0 40 38"><path d="M13 28 V25 Q7 21 7 15 A10 10 0 0 1 27 15 Q27 21 21 25 V28 Z" fill="none" stroke="#333" stroke-width="2.6" stroke-linecap="round" stroke-linejoin="round"/><path d="M14 33 H20" fill="none" stroke="#333" stroke-width="2.6" stroke-linecap="round" stroke-linejoin="round"/><path d="M17 1 V4 M5 5 L7 7 M29 5 L27 7 M1 14 H4 M30 14 H33" fill="none" stroke="#333" stroke-width="2.6" stroke-linecap="round" stroke-linejoin="round"/></svg>
<div class="b" style="left:2352px;top:511px;width:282px;height:169px;background:#fff;border-radius:7px;box-shadow:0 2px 10px rgba(0,0,0,0.13);"></div>
<div class="b" style="left:2352px;top:621px;width:282px;height:52px;background:#e8f5fd;"></div>
<svg class="b" style="left:2372px;top:531px;" width="30" height="30" viewBox="0 0 30 30"><path d="M12 3 L8.5 27 M21.5 3 L18 27 M4.5 10.5 H25.5 M3 19.5 H24" fill="none" stroke="#555" stroke-width="2.1" stroke-linecap="round"/></svg>
<svg class="b" style="left:2370px;top:579px;" width="30" height="30" viewBox="0 0 30 30"><g transform="rotate(-45 15 15)"><path d="M13 10 H8 A5 5 0 0 0 8 20 H13 M17 10 H22 A5 5 0 0 1 22 20 H17 M10.5 15 H19.5" fill="none" stroke="#666" stroke-width="2.2" stroke-linecap="round"/></g></svg>
<div class="t " style="left:2416.0px;top:534.3px;font-size:23.3px;color:#222;">Copy ID</div>
<div class="t " style="left:2416.0px;top:585.0px;font-size:22.5px;color:#222;">Copy URL</div>
<svg class="b" style="left:2367px;top:632px;" width="36" height="28" viewBox="0 0 36 28"><path d="M10 6 L3 14 L10 22 M26 6 L33 14 L26 22 M20 4 L16 25" fill="none" stroke="#3e86e8" stroke-width="2.4" stroke-linecap="round" stroke-linejoin="round"/></svg>
<div class="t " style="left:2416.0px;top:634.2px;font-size:23.4px;color:#222;">Copy Meta</div>
<div class="b" style="left:2542px;top:635px;width:22px;height:22px;background:#3e86e8;border-radius:50%;"></div>
<div class="t" style="left:2542px;top:635px;width:22px;text-align:center;font-size:17px;line-height:22px;color:#fff;font-weight:700;">i</div>
<div class="b" style="left:2183px;top:673px;width:400px;height:98px;background:#1e1e1e;border-radius:7px;box-shadow:0 3px 8px rgba(0,0,0,0.25);"></div>
<svg class="b" style="left:2537px;top:660px;" width="32" height="15" viewBox="0 0 32 15"><path d="M3 15 L16 2 L29 15 Z" fill="#1e1e1e" stroke="#1e1e1e" stroke-width="2" stroke-linejoin="round"/></svg>
<div class="t " style="left:2202.0px;top:695.5px;font-size:23px;color:#fff;">Includes Request ID, Subject,</div>
<div class="t " style="left:2202.0px;top:725.5px;font-size:23px;color:#fff;">Requester, Created Date and URL.</div>
</body></html>
